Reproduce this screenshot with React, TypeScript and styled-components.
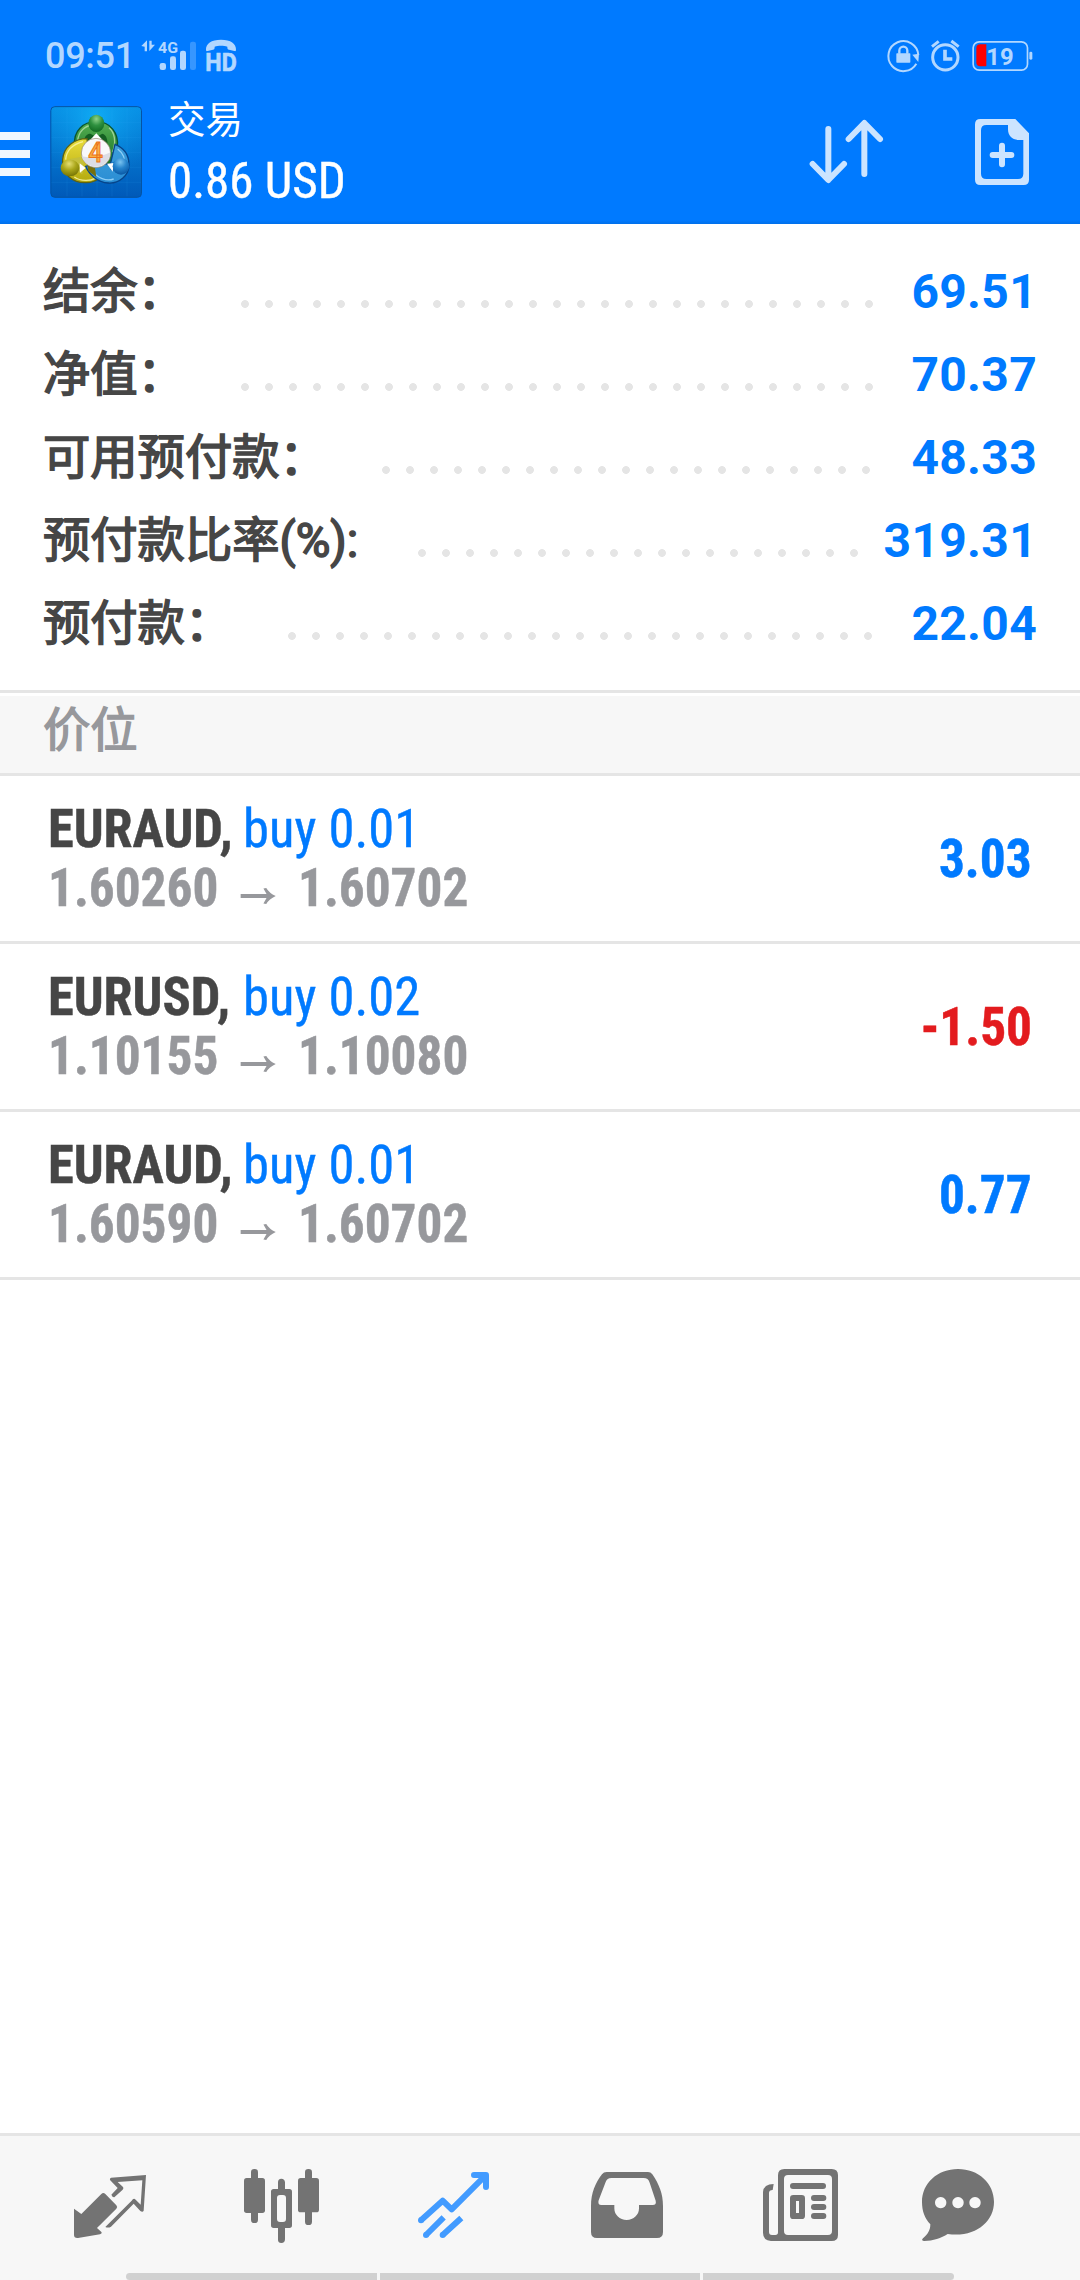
import React from "react";
import styled, { createGlobalStyle } from "styled-components";

const BLUE = "#007aff";
const RED = "#e31b1e";
const SANS = `Roboto, "Noto Sans CJK SC", sans-serif`;
const CONDENSED = `"Roboto Condensed", Roboto, "Noto Sans CJK SC", sans-serif`;

const GlobalStyle = createGlobalStyle`
  * { box-sizing: border-box; }
  body { margin: 0; background: #fff; }
`;

const Screen = styled.div`
  width: 1080px;
  height: 2280px;
  display: flex;
  flex-direction: column;
  background: #fff;
  font-family: ${SANS};
  overflow: hidden;
`;

const Header = styled.header`
  height: 224px;
  background: linear-gradient(to bottom, ${BLUE} 220px, #0070ea 224px);
  color: #fff;
`;

const StatusBar = styled.div`
  height: 92px;
  padding: 20px 47px 0 45px;
  display: flex;
  align-items: center;
  color: #b2d7ff;
`;

const Clock = styled.span`
  width: 96px;
  font-size: 36px;
  line-height: 36px;
  font-weight: 500;
  letter-spacing: -0.3px;
`;

const Glyph = styled.svg<{ $ml?: number }>`
  display: block;
  flex: none;
  margin-left: ${(p) => p.$ml ?? 0}px;
  overflow: visible;
`;

const Spacer = styled.div`
  flex: 1;
`;

const AppBar = styled.div`
  height: 132px;
  display: flex;
  align-items: flex-start;
`;

const MenuButton = styled.div`
  width: 30px;
  margin-top: 40px;
  display: flex;
  flex-direction: column;
  gap: 10px;
`;

const MenuLine = styled.i`
  height: 8px;
  background: #f0f7ff;
`;

const LogoBox = styled.div`
  margin: 14px 0 0 20px;
`;

const Titles = styled.div`
  margin-left: 26px;
  display: flex;
  flex-direction: column;
`;

const Title = styled.div`
  margin-top: 6px;
  font-size: 37.5px;
  line-height: 44px;
`;

const Stretch = styled.span<{ $sx: number; $origin?: string }>`
  display: inline-block;
  white-space: pre;
  transform: scaleX(${(p) => p.$sx});
  transform-origin: ${(p) => p.$origin ?? "left"} center;
`;

const Profit = styled.div`
  margin-top: 10px;
  font-family: ${CONDENSED};
  font-stretch: 75%;
  font-size: 50px;
  line-height: 58px;
  -webkit-text-stroke: 0.4px #fff;
`;

const Actions = styled.div`
  margin-left: auto;
  padding: 27px 51px 0 0;
  display: flex;
`;

const Summary = styled.section`
  height: 466px;
  padding-top: 26px;
`;

const SummaryRow = styled.div<{ $lead: number }>`
  height: 83px;
  padding: 0 43px 0 43px;
  display: grid;
  grid-template-columns: ${(p) => p.$lead - 55}px auto 1fr;
  align-items: center;
`;

const Label = styled.span`
  padding-top: 1px;
  font-size: 47.3px;
  line-height: 80px;
  color: #464646;
  -webkit-text-stroke: 1.6px #464646;
  white-space: nowrap;
`;

const Leader = styled.span<{ $count: number }>`
  width: ${(p) => p.$count * 24}px;
  height: 10px;
  margin-top: 24px;
  background: radial-gradient(circle at center, #e5e5e5 3.5px, rgba(229, 229, 229, 0) 4.3px) 0 0 / 24px 10px repeat-x;
`;

const Amount = styled.span`
  justify-self: end;
  font-size: 48px;
  line-height: 83px;
  font-weight: 700;
  letter-spacing: 0.3px;
  color: ${BLUE};
`;

const SectionTitle = styled.div`
  height: 86px;
  padding: 3px 0 0 43px;
  border-top: 3px solid #e5e5e5;
  border-bottom: 3px solid #e5e5e5;
  background: linear-gradient(to bottom, #fff 3px, #f7f7f7 3px);
  color: #97989c;
  -webkit-text-stroke: 1.4px #97989c;
  font-size: 47.3px;
  line-height: 70px;
`;

const Position = styled.div`
  height: 168px;
  padding: 0 48px;
  display: flex;
  align-items: center;
  justify-content: space-between;
  border-bottom: 3px solid #e5e5e5;
  font-family: ${CONDENSED};
  font-stretch: 75%;
  font-size: 54px;
`;

const PositionText = styled.div`
  padding-bottom: 1px;
  display: flex;
  flex-direction: column;
`;

const Line = styled.div`
  height: 59px;
  line-height: 59px;
  white-space: nowrap;
  display: flex;
`;

const Symbol = styled.b`
  width: 195px;
  color: #464646;
  -webkit-text-stroke: 0.5px #464646;
`;

const Side = styled.span`
  color: ${BLUE};
  -webkit-text-stroke: 0.4px ${BLUE};
`;

const Prices = styled.div`
  height: 59px;
  line-height: 59px;
  color: #97989c;
  -webkit-text-stroke: 0.5px #97989c;
  font-weight: 700;
  display: flex;
  align-items: center;
  transform: scaleX(0.949);
  transform-origin: left center;
`;

const Result = styled.div<{ $loss: boolean }>`
  font-weight: 700;
  color: ${(p) => (p.$loss ? RED : BLUE)};
  -webkit-text-stroke: 0.5px ${(p) => (p.$loss ? RED : BLUE)};
`;

const TabBar = styled.nav`
  height: 147px;
  margin-top: auto;
  border-top: 3px solid #e5e5e5;
  background: #f7f7f7;
  display: flex;
  flex-direction: column;
  justify-content: space-between;
`;

const Tabs = styled.div`
  padding: 28px 24px 0;
  display: flex;
`;

const Tab = styled.div<{ $active?: boolean }>`
  width: 172px;
  display: flex;
  justify-content: center;
  color: ${(p) => (p.$active ? "#429bff" : "#737373")};
`;

const GestureBar = styled.div`
  height: 7px;
  margin: 0 126px;
  display: grid;
  grid-template-columns: 251px 320px 251px;
  gap: 3px;
  border-radius: 4px;
  overflow: hidden;
`;

const GesturePart = styled.i`
  background: #d1d1d1;
`;

const Network = () => (
  <Glyph width={56} height={34} viewBox="423 55 168 102" fill="currentColor">
    <path d="M424 76l17-17v33h-7V78zM448 60h7v12h10l-17 19z" />
    <text x="474" y="96" fontSize="45" fontWeight="700" fontFamily="Roboto, sans-serif" textLength="60" lengthAdjust="spacingAndGlyphs">4G</text>
    <rect x="479" y="127" width="19" height="21" rx="7" />
    <rect x="510" y="107" width="18" height="41" rx="7" />
    <rect x="540" y="90" width="18" height="58" rx="7" />
    <rect x="570" y="63" width="18" height="85" rx="7" opacity=".3" />
  </Glyph>
);

const HdCall = () => (
  <Glyph $ml={9} width={30} height={34} viewBox="618 55 90 102" fill="currentColor">
    <path d="M618 88c-1-20 16-31 45-31s46 11 45 31c0 3-2 4-5 3l-16-4c-4-1-5-3-5-9-10-4-28-4-38 0 0 6-1 8-5 9l-16 4c-3 1-5 0-5-3z" />
    <text x="616" y="150" fontSize="77" fontWeight="700" fontFamily="Roboto, sans-serif" stroke="currentColor" strokeWidth="2" textLength="94" lengthAdjust="spacingAndGlyphs">HD</text>
  </Glyph>
);

const StatusIcons = () => (
  <Glyph width={146} height={34} viewBox="320 55 438 102" fill="currentColor">
    <g>
      <path d="M408 129A45 45 0 1 1 414 103" fill="none" stroke="currentColor" strokeWidth="6" />
      <path d="M396 102l20-3-2 25z" />
      <rect x="348" y="98" width="42" height="28" rx="2" />
      <path d="M357 99V90a12 12 0 0 1 24 0v9" fill="none" stroke="currentColor" strokeWidth="7" />
    </g>
    <g fill="none" stroke="currentColor">
      <circle cx="495" cy="110" r="38" strokeWidth="9" />
      <path d="M494 87v28h22" strokeWidth="11" />
      <path d="M455 78l20-16M535 78l-22-17" strokeWidth="9" />
    </g>
    <rect x="578.500" y="63.500" width="163" height="85" rx="18" fill="none" stroke="currentColor" strokeWidth="5" />
    <path d="M618 71h-18q-12 0-12 12v42q0 12 12 12h18z" fill="#f00" />
    <text x="618" y="132" fontSize="71" fontWeight="700" fontFamily="Roboto, sans-serif" textLength="82" lengthAdjust="spacingAndGlyphs">19</text>
    <rect x="747" y="93" width="9" height="24" rx="4" />
  </Glyph>
);

const Logo = () => (
  <Glyph width={92} height={92} viewBox="29 33 276 276">
    <defs>
      <linearGradient id="tile" x1="0" y1="0" x2="0" y2="1">
        <stop offset="0" stopColor="#0791e6" />
        <stop offset="1" stopColor="#0059b8" />
      </linearGradient>
      <radialGradient id="glow" cx=".5" cy=".12" r=".7">
        <stop offset="0" stopColor="#12b4fa" stopOpacity=".8" />
        <stop offset="1" stopColor="#0a8be0" stopOpacity="0" />
      </radialGradient>
      <linearGradient id="green" x1="0" y1="0" x2="0" y2="1">
        <stop offset="0" stopColor="#55b052" />
        <stop offset="1" stopColor="#176f26" />
      </linearGradient>
      <linearGradient id="yellow" x1="0" y1="0" x2="0" y2="1">
        <stop offset="0" stopColor="#e9dc3a" />
        <stop offset="1" stopColor="#b3a90e" />
      </linearGradient>
      <linearGradient id="blue" x1="0" y1="0" x2="0" y2="1">
        <stop offset="0" stopColor="#3d9edb" />
        <stop offset="1" stopColor="#2a8ed4" />
      </linearGradient>
      <radialGradient id="greenHead" cx=".5" cy=".25" r=".75">
        <stop offset="0" stopColor="#8fd38a" />
        <stop offset=".5" stopColor="#2f9140" />
        <stop offset="1" stopColor="#126b22" />
      </radialGradient>
      <radialGradient id="yellowHead" cx=".45" cy=".25" r=".75">
        <stop offset="0" stopColor="#e6df73" />
        <stop offset=".5" stopColor="#aaa61a" />
        <stop offset="1" stopColor="#767505" />
      </radialGradient>
      <radialGradient id="blueHead" cx=".45" cy=".25" r=".75">
        <stop offset="0" stopColor="#79c3f0" />
        <stop offset=".5" stopColor="#2583cc" />
        <stop offset="1" stopColor="#0a59a6" />
      </radialGradient>
    </defs>
    <rect x="31.500" y="35" width="272" height="272" rx="12" fill="url(#tile)" stroke="#0553a2" strokeWidth="3" />
    <rect x="33" y="37" width="269" height="268" rx="11" fill="url(#glow)" />
    <path d="M80 38v266M125 38v266M170 38v266M215 38v266M260 38v266M33 82h269M33 127h269M33 172h269M33 217h269M33 262h269" stroke="#42b4ff" strokeOpacity=".16" strokeWidth="2" fill="none" />
    <g strokeWidth="4">
      <path d="M103 152C98 108 128 80 168 80c42 0 68 34 63 76-3 24-14 46-30 56l-8-46-25-24-30 10c-12 14-28 14-35 0z" fill="url(#green)" stroke="#0b5630" />
      <path d="M112 138c2-28 22-46 44-48M206 98c18 14 22 46 10 74" fill="none" stroke="#b5e0a8" strokeWidth="4" opacity=".8" />
      <path d="M132 132c4-12 10-16 18-16l18 10 18-10c12 4 16 14 16 40l-20-10h-44z" fill="#145f22" stroke="none" />
      <path d="M152 132l16-17 16 17z" fill="#fff" stroke="none" />
      <path d="M140 131c-38 0-70 24-73 62-4 46 32 72 72 70 16 0 28-6 38-14l-30-52z" fill="url(#yellow)" stroke="#5d6214" />
      <path d="M76 194c2-28 22-46 52-54M102 246c20 14 48 12 62 4" fill="none" stroke="#faf5a5" strokeWidth="4" opacity=".85" />
      <path d="M224 148c26 10 42 32 42 62 0 32-30 56-62 54-34-2-58-26-68-50l34-10 40 4z" fill="url(#blue)" stroke="#06448a" />
      <path d="M232 162c16 12 24 32 20 52M154 226c18 24 44 34 66 26" fill="none" stroke="#9ed8fb" strokeWidth="4" opacity=".85" />
    </g>
    <path d="M88 192l32-6 10 18-4 34-14-8z" fill="#c4bf3c" />
    <path d="M118 205l18 14-17 14z" fill="#fff" />
    <path d="M140 206l24 14 4 26-24-18z" fill="#77700c" />
    <path d="M245 190l-32 14-4 20 20 8z" fill="#1a6fb6" />
    <path d="M220 204l-20 2 17 24z" fill="#fff" />
    <ellipse cx="168" cy="85" rx="24" ry="26" fill="url(#greenHead)" />
    <ellipse cx="89" cy="219" rx="28" ry="25" fill="url(#yellowHead)" />
    <ellipse cx="242" cy="214" rx="25" ry="25" fill="url(#blueHead)" />
    <circle cx="167" cy="174" r="44" fill="#f8f8fa" stroke="#8c8064" strokeWidth="2" />
    <path d="M124 184q44 10 86-12a44 44 0 0 1-86 12z" fill="#dcdde5" />
    <text x="144" y="201" fontSize="82" fontWeight="500" fontFamily="Roboto, sans-serif" fill="#f9b145" stroke="#ec741c" strokeWidth="3" textLength="44" lengthAdjust="spacingAndGlyphs">4</text>
  </Glyph>
);

const SortArrows = () => (
  <Glyph width={74} height={66} viewBox="89 297 222 198" fill="none" stroke="#cce4ff" strokeWidth="18" strokeLinecap="round" strokeLinejoin="round">
    <path d="M144 327v151M97 432l47 48 47-48" />
    <path d="M252 462V311M205 357l47-48 47 48" />
  </Glyph>
);

const NewOrder = () => (
  <Glyph $ml={91} width={54} height={66} viewBox="585 297 162 198">
    <path fillRule="evenodd" fill="#cce4ff" d="M601 297h105l41 43v139q0 16-16 16H601q-16 0-16-16V313q0-16 16-16zM684 315h-65q-16 0-16 16v130q0 16 16 16h95q16 0 16-16V360h-13c-20 0-33-13-33-32z" />
    <path d="M638 405h56M666 377v56" stroke="#cce4ff" strokeWidth="18" strokeLinecap="round" />
  </Glyph>
);

const TabGlyph = ({ cx, children }: { cx: number; children: React.ReactNode }) => (
  <Glyph width={84} height={84} viewBox={`${cx - 126} 132 252 252`} fill="currentColor">
    {children}
  </Glyph>
);

const QuotesIcon = () => (
  <TabGlyph cx={330}>
    <path d="M222 266l22 16 60-60q6-6 12 0l33 34q5 5 0 10l-58 58 14 13q1 5-5 6l-66 11q-12 1-12-9z" />
    <path fillRule="evenodd" d="M438 165l-7 107q-3 6-10 1l-20-22-68 69q-8 5-17 1l79-79q6-10 12-3l15 15 5-73-74 5 16 15q3 4-1 8l-25 23q-6 0-9-8l19-20-23-24q-2-5 3-7z" />
  </TabGlyph>
);

const ChartIcon = () => (
  <TabGlyph cx={846}>
    <rect x="732" y="174" width="63" height="105" rx="8" />
    <rect x="753" y="147" width="21" height="162" rx="10" />
    <rect x="894" y="174" width="63" height="103" rx="8" />
    <rect x="915" y="147" width="21" height="168" rx="10" />
    <path fillRule="evenodd" d="M834 207v-20q0-11 10-11t11 11v20h13q8 0 8 8v101q0 8-8 8h-13v34q0 11-11 11t-10-11v-34h-13q-8 0-8-8V215q0-8 8-8zM840 225q-9 0-9 9v63q0 9 9 9h9q9 0 9-9v-63q0-9-9-9z" />
  </TabGlyph>
);

const TradeIcon = () => (
  <TabGlyph cx={282}>
    <g fill="none" stroke="currentColor" strokeWidth="18">
      <path d="M183 301l65-59 27 26 98-98" strokeLinejoin="round" />
      <path d="M342 165h36v36" strokeLinecap="round" strokeLinejoin="round" />
      <path d="M198 345l53-53M248 345l56-51" />
    </g>
    <path d="M355 165h23v23z" />
    <circle cx="183" cy="301" r="9" />
    <circle cx="198" cy="345" r="9" />
    <circle cx="248" cy="345" r="9" />
  </TabGlyph>
);

const HistoryIcon = () => (
  <TabGlyph cx={798}>
    <path fillRule="evenodd" d="M740 156h124q8 0 13 7c21 31 32 59 32 95v78q0 18-18 18H711q-18 0-18-18v-78c0-38 13-69 33-95q5-7 14-7zM754 174c-9 0-14 4-17 12l-21 55q-4 14 8 14h39v10c0 20 16 35 37 35s37-15 37-35v-10h41q12 0 9-13l-18-54c-3-10-9-14-18-14z" />
  </TabGlyph>
);

const NewsIcon = () => (
  <TabGlyph cx={234}>
    <path fillRule="evenodd" d="M193 147h142q19 0 19 18v180q0 18-19 18H153q-24-2-24-25V216q2-24 32-24l-3 18q-11 0-11 9v117q0 9 9 9h10q8 0 8-8V166q0-19 19-19zM204 165q-12 0-12 12v156q0 12 12 12h120q12 0 12-12V177q0-12-12-12z" />
    <rect x="210" y="189" width="108" height="18" rx="9" />
    <path fillRule="evenodd" d="M220 225h25q10 0 10 10v52q0 10-10 10h-25q-10 0-10-10v-52q0-10 10-10zM228 243v36h9v-36z" />
    <rect x="273" y="225" width="46" height="18" rx="9" />
    <rect x="273" y="252" width="46" height="18" rx="9" />
    <rect x="273" y="279" width="46" height="18" rx="9" />
  </TabGlyph>
);

const ChatIcon = () => (
  <TabGlyph cx={750}>
    <path fillRule="evenodd" d="M714 147c61 0 108 42 108 99 0 60-58 108-139 96-19 12-44 21-70 21q-11-1-4-8c14-11 22-24 22-42-17-18-25-40-25-67 0-57 47-99 108-99zM662 231a17 17 0 1 0 .1 0zM714 231a17 17 0 1 0 .1 0zM765 231a17 17 0 1 0 .1 0z" />
  </TabGlyph>
);

const PriceArrow = () => (
  <Glyph width={37} height={18} viewBox="0 0 37 18" fill="none" stroke="currentColor" strokeWidth="4">
    <path d="M0 9h33" />
    <path d="M24 1.500L27 1q3 5 10 8-7 3-10 8l-3-.5L28.500 9z" fill="currentColor" stroke="none" />
  </Glyph>
);

const To = styled.span`
  width: 84px;
  padding: 17px 0 0 24px;
`;

const summary = [
  { label: "结余：", value: "69.51", lead: 245, count: 27 },
  { label: "净值：", value: "70.37", lead: 245, count: 27 },
  { label: "可用预付款：", value: "48.33", lead: 386, count: 21 },
  { label: "预付款比率(%):", value: "319.31", lead: 422, count: 19 },
  { label: "预付款：", value: "22.04", lead: 292, count: 25 },
];

const positions = [
  { symbol: "EURAUD,", side: "buy 0.01", open: "1.60260", now: "1.60702", result: "3.03" },
  { symbol: "EURUSD,", side: "buy 0.02", open: "1.10155", now: "1.10080", result: "-1.50" },
  { symbol: "EURAUD,", side: "buy 0.01", open: "1.60590", now: "1.60702", result: "0.77" },
];

export default function App() {
  return (
    <Screen>
      <GlobalStyle />
      <Header>
        <StatusBar>
          <Clock>09:51</Clock>
          <Network />
          <HdCall />
          <Spacer />
          <StatusIcons />
        </StatusBar>
        <AppBar>
          <MenuButton>
            <MenuLine />
            <MenuLine />
            <MenuLine />
          </MenuButton>
          <LogoBox>
            <Logo />
          </LogoBox>
          <Titles>
            <Title>交易</Title>
            <Profit>
              <Stretch $sx={0.98}>0.86 USD</Stretch>
            </Profit>
          </Titles>
          <Actions>
            <SortArrows />
            <NewOrder />
          </Actions>
        </AppBar>
      </Header>
      <Summary>
        {summary.map((row) => (
          <SummaryRow key={row.label} $lead={row.lead}>
            <Label>{row.label}</Label>
            <Leader $count={row.count} />
            <Amount>{row.value}</Amount>
          </SummaryRow>
        ))}
      </Summary>
      <SectionTitle>价位</SectionTitle>
      {positions.map((p) => (
        <Position key={p.open}>
          <PositionText>
            <Line>
              <Symbol>
                <Stretch $sx={0.97}>{p.symbol}</Stretch>
              </Symbol>
              <Side>
                <Stretch $sx={0.975}>{p.side}</Stretch>
              </Side>
            </Line>
            <Prices>
              {p.open}
              <To>
                <PriceArrow />
              </To>
              {p.now}
            </Prices>
          </PositionText>
          <Result $loss={p.result.startsWith("-")}>
            <Stretch $sx={0.95} $origin="right">{p.result}</Stretch>
          </Result>
        </Position>
      ))}
      <TabBar>
        <Tabs>
          <Tab><QuotesIcon /></Tab>
          <Tab><ChartIcon /></Tab>
          <Tab $active><TradeIcon /></Tab>
          <Tab><HistoryIcon /></Tab>
          <Tab><NewsIcon /></Tab>
          <Tab><ChatIcon /></Tab>
        </Tabs>
        <GestureBar>
          <GesturePart />
          <GesturePart />
          <GesturePart />
        </GestureBar>
      </TabBar>
    </Screen>
  );
}
